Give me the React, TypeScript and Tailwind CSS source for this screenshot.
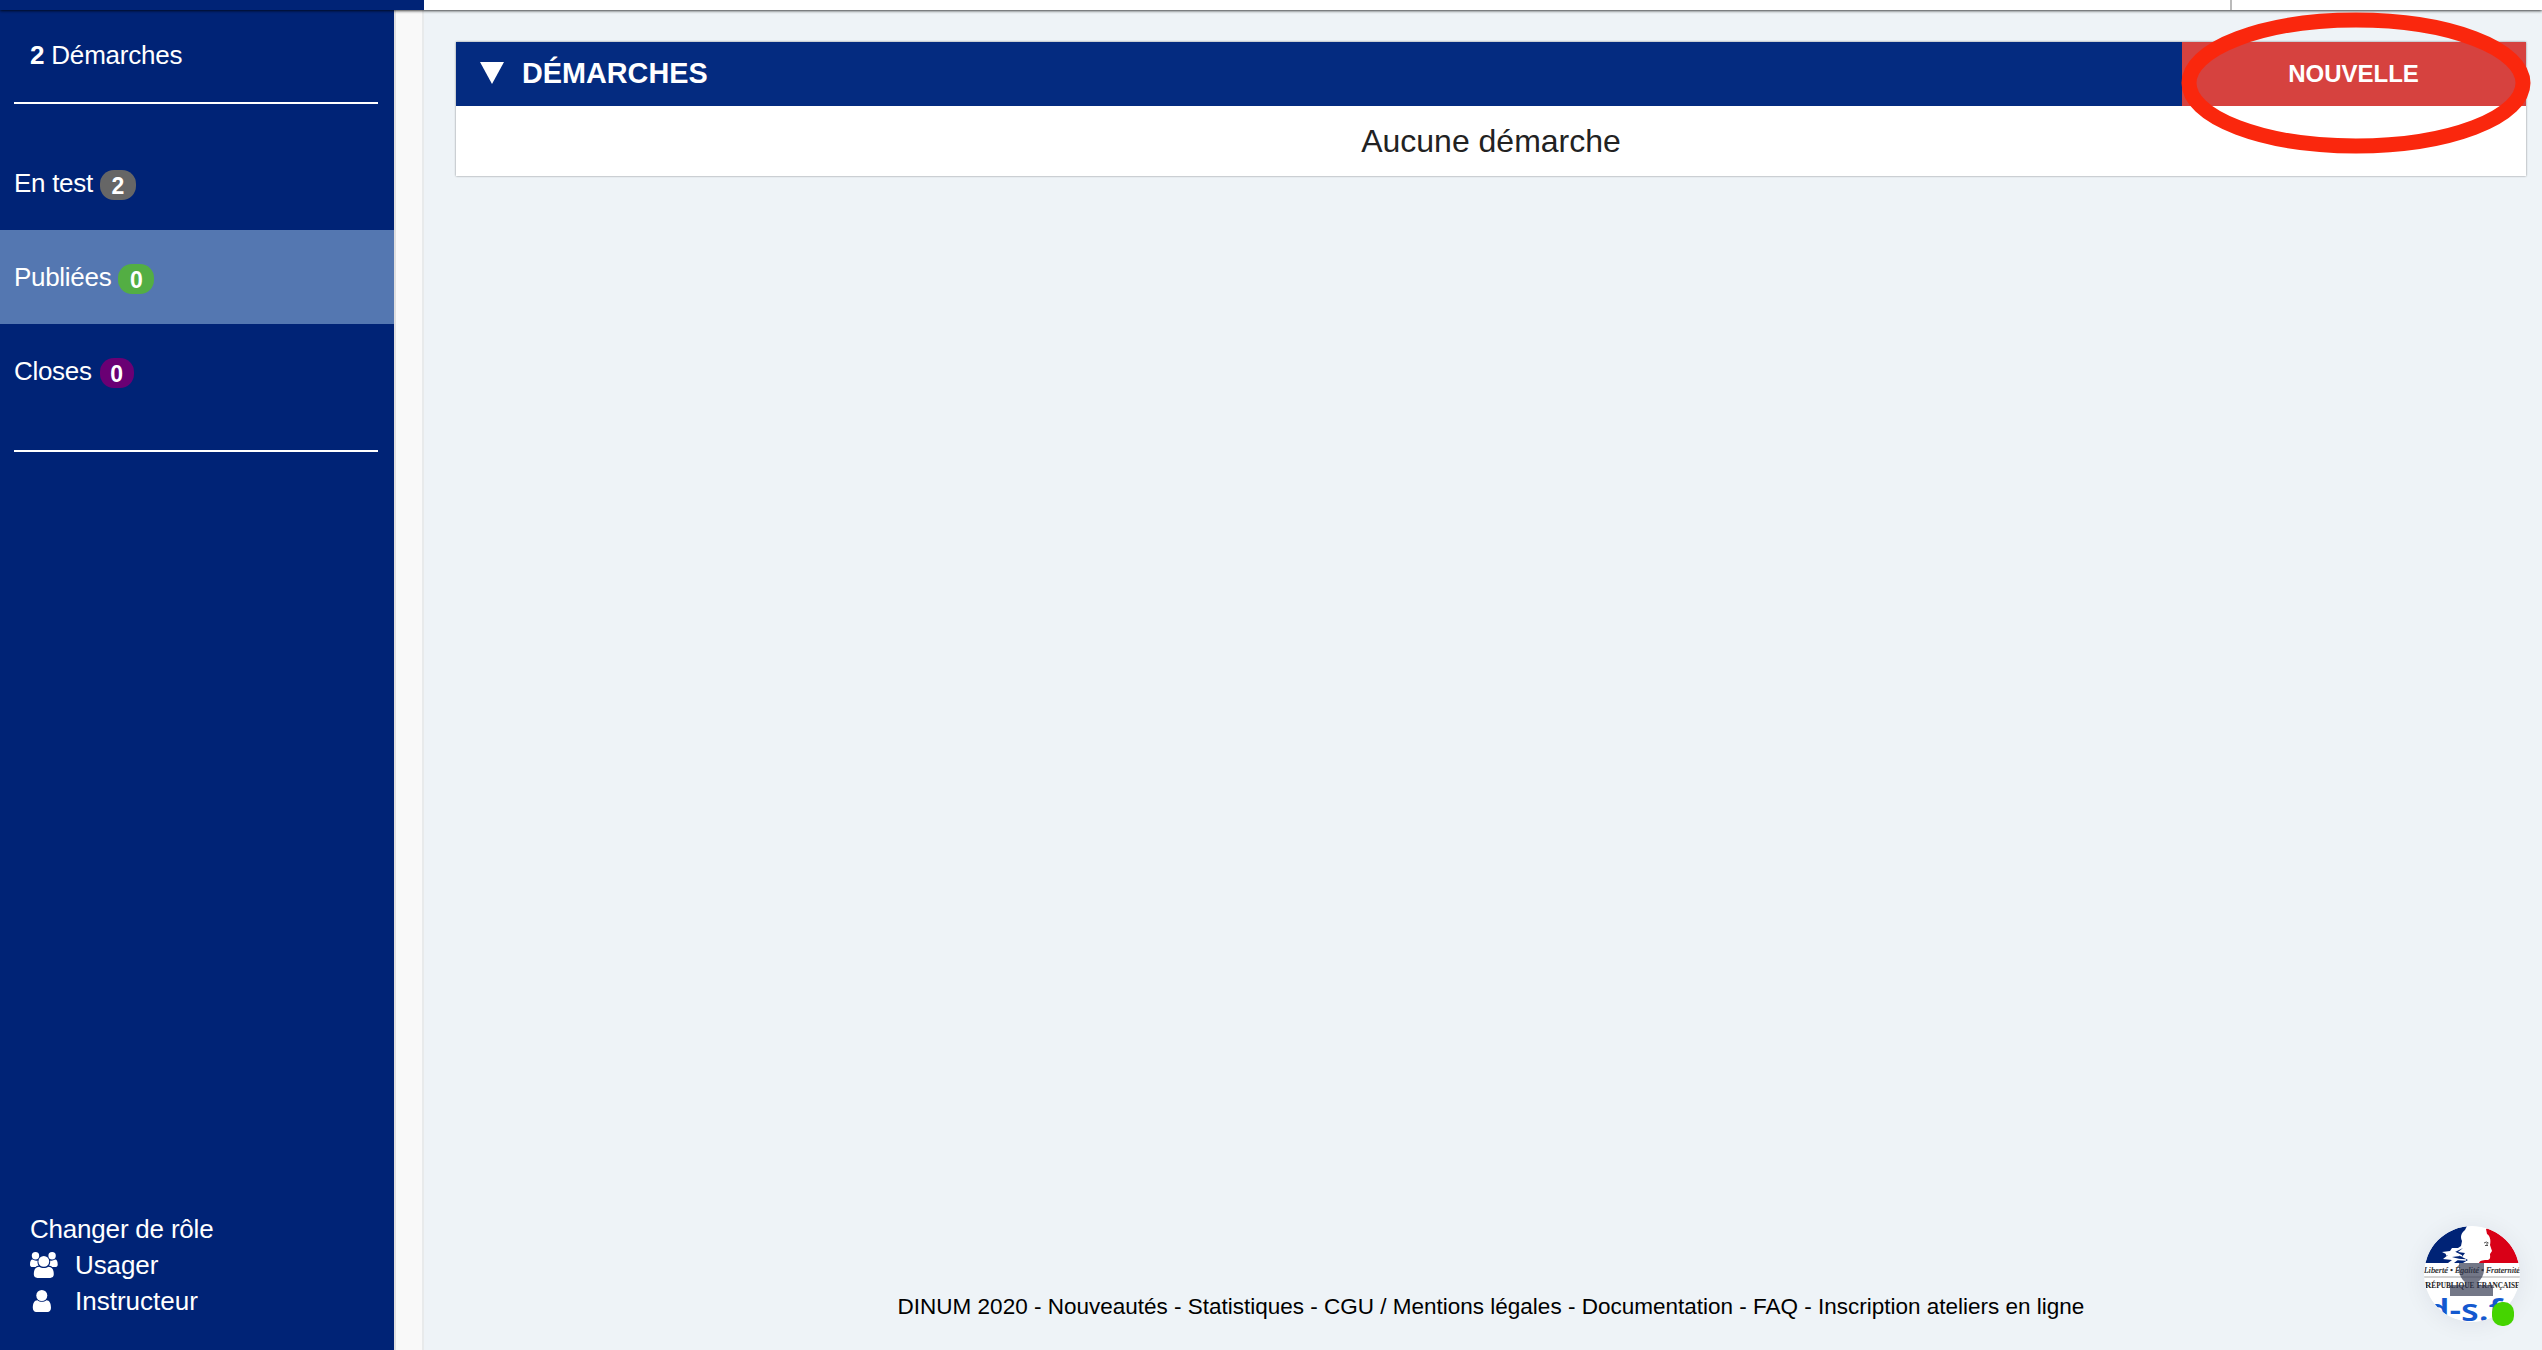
const filters = [
  { label: "En test", count: 2, row: "", badge: "bg-[#666666] w-9 ml-[7px]" },
  { label: "Publiées", count: 0, row: "bg-[#5477b1]", badge: "bg-[#53ae43] w-9 ml-[7px]" },
  { label: "Closes", count: 0, row: "", badge: "bg-[#6a0074] w-[34px] ml-2" },
];

const footerText =
  "DINUM 2020 - Nouveautés - Statistiques - CGU / Mentions légales - Documentation - FAQ - Inscription ateliers en ligne";

function UsersIcon() {
  return (
    <svg width="28" height="26" viewBox="0 0 28 26" fill="white">
      <circle cx="5.5" cy="3.8" r="3.7" />
      <circle cx="22.1" cy="3.8" r="3.7" />
      <path d="M2.4 7.6C1 7.6 0 9.4 0 12.4C0 14.2 1.1 15 2.6 15H5.6C6.6 14 7.6 13.8 8.6 13.8C7.7 12.4 7.4 10.8 7.5 8.6C5.8 9.1 4 8.6 2.4 7.6Z" />
      <path d="M25.2 7.6C26.700 7.6 27.7 9.4 27.7 12.4C27.7 14.2 26.6 15 25.1 15H22.1C21.1 14 20.1 13.8 19.1 13.8C20 12.4 20.3 10.8 20.2 8.6C21.8 9.1 23.6 8.6 25.2 7.6Z" />
      <circle cx="13.8" cy="9.4" r="5.4" />
      <path d="M9 14.7C5.4 14.7 3.8 17.8 3.8 22.3C3.8 24.6 5.2 25.9 7.4 25.9H20.2C22.4 25.9 23.8 24.6 23.8 22.3C23.8 17.8 22.2 14.7 18.6 14.7C17 15.6 15.6 16 13.8 16C12 16 10.6 15.6 9 14.7Z" />
    </svg>
  );
}

function UserIcon() {
  return (
    <svg width="24" height="22" viewBox="0 0 24 22" fill="white">
      <circle cx="11.8" cy="5.5" r="5.5" />
      <path d="M7.4 10.2C4.2 10.2 2.8 13.5 2.8 17.8C2.8 20.3 4.2 22 6.2 22H17.6C19.6 22 21 20.3 21 17.8C21 13.5 19.6 10.2 16.4 10.2C15 11.2 13.6 11.7 11.9 11.7C10.2 11.7 8.8 11.2 7.4 10.2Z" />
    </svg>
  );
}

function Sidebar() {
  return (
    <aside className="flex w-[394px] shrink-0 flex-col bg-[#002376] text-[26px] leading-9 text-white">
      <div className="h-[92px] pl-[30px] pt-[27px] tracking-[-0.2px]">
        <b>2</b> Démarches
      </div>
      <hr className="ml-[14px] w-[364px] border-t-2 border-white" />
      <nav className="pt-8">
        {filters.map((f) => (
          <a key={f.label} className={"flex h-[94px] items-center pl-[14px] tracking-[-0.3px] " + f.row}>
            <span className="-mt-px">{f.label}</span>
            <span
              className={
                "mt-[4px] flex h-[30px] items-center justify-center rounded-[14px] pt-[2px] text-[23px] font-bold leading-none tracking-normal " +
                f.badge
              }
            >
              {f.count}
            </span>
          </a>
        ))}
      </nav>
      <hr className="ml-[14px] mt-8 w-[364px] border-t-2 border-white" />
      <div className="mb-[31px] mt-auto pl-[30px]">
        <p className="tracking-[-0.2px]">Changer de rôle</p>
        <a className="flex items-center tracking-[-0.1px]">
          <span className="w-[45px]">
            <UsersIcon />
          </span>
          Usager
        </a>
        <a className="flex items-center">
          <span className="w-[45px]">
            <UserIcon />
          </span>
          Instructeur
        </a>
      </div>
    </aside>
  );
}

function Avatar() {
  return (
    <div className="absolute bottom-[28px] right-[22px] size-24">
      <svg className="block size-24 rounded-full shadow-[0_2px_24px_rgba(0,20,60,0.07)]" viewBox="0 0 96 96">
        <defs>
          <clipPath id="disc">
            <circle cx="48" cy="48" r="48" />
          </clipPath>
        </defs>
        <g clipPath="url(#disc)">
          <rect width="96" height="96" fill="white" />
          <path d="M0 0H43L41 4C37 7 36 11 38 15L37 20L34 22L28 22L26 25L18 26L24 29L19 33L28 34L24 37H0Z" fill="#002376" />
          <path d="M62 3L68 0H96V37H55C56 34 60 34 64 34C67 33 66 30 66 28L68 25L66 19C67 14 66 10 63 8Z" fill="#d90017" />
          <path d="M39 22L34 26L41 27L38 31L44 34L39 37H30L35 33L28 31L36 30L31 26Z" fill="#002376" />
          <path d="M22 29L30 26L38 30M27 33L42 34" stroke="white" strokeWidth="1.5" fill="none" />
          <path d="M60 17Q62.5 15 64.5 17M61 19.5H64M63 17V20" stroke="#555" strokeWidth="1" fill="none" />
          <g fontFamily="Liberation Serif, serif" fill="#222">
            <text x="0" y="47" fontSize="8" fontStyle="italic" stroke="#222" strokeWidth=".2" textLength="96" lengthAdjust="spacingAndGlyphs">
              Liberté • Égalité • Fraternité
            </text>
            <text x="1" y="61.5" fontSize="9" fontWeight="bold" textLength="95" lengthAdjust="spacingAndGlyphs">
              R<tspan fontSize="7.5">ÉPUBLIQUE</tspan> F<tspan fontSize="7.5">RANÇAISE</tspan>
            </text>
          </g>
          <path d="M0 51H96" stroke="#aaa" strokeWidth="1" />
          <text x="3" y="94.5" fontFamily="Noto Sans, sans-serif" fontSize="31" fontWeight="600" fill="#1459cf" textLength="75" lengthAdjust="spacingAndGlyphs">
            d-s.f
          </text>
          <path d="M35 37H60V45Q59 52 54 56V59H69V70H26V59H41V56Q36 52 35 45Z" fill="#30364e" fillOpacity=".68" />
        </g>
      </svg>
      <span className="absolute left-[68px] top-[76px] h-6 w-[22px] rounded-[10px] bg-[#45d400]" />
    </div>
  );
}

export default function App() {
  return (
    <div className="relative flex h-[1350px] w-[2542px] flex-col overflow-hidden bg-[#eef3f7] font-['Liberation_Sans',Arial,sans-serif]">
      <header className="z-10 flex h-[10px] shrink-0 bg-white shadow-[0_1px_3px_rgba(0,0,0,0.75)]">
        <div className="w-[424px] bg-[#002376]" />
        <div className="ml-[1806px] w-[2px] bg-[#bababa]" />
      </header>
      <div className="flex min-h-0 flex-1">
        <Sidebar />
        <div className="w-[30px] shrink-0 border-x-2 border-l-[#e0dfe0] border-r-[#e8eaeb] bg-[#f9f9f9]" />
        <main className="flex flex-1 flex-col pl-8 pr-4 pt-8">
          <section className="bg-white shadow-[0_0_2px_rgba(0,0,0,0.45)]">
            <div className="flex h-16 items-center bg-[#042b80] font-bold text-white">
              <svg className="-mt-[2px] ml-6" width="24" height="22" viewBox="0 0 24 22">
                <path d="M0 0H24L12 22Z" fill="white" />
              </svg>
              <h1 className="-mt-[2px] ml-[18px] text-[28.8px] leading-8">DÉMARCHES</h1>
              <button className="ml-auto h-16 w-[344px] bg-[#d6423f] pr-px text-[24px] font-bold">NOUVELLE</button>
            </div>
            <p className="h-[70px] text-center text-[32px] leading-[70px] text-[#222222]">Aucune démarche</p>
          </section>
          <footer className="mb-[27px] mt-auto text-center text-[22.5px] leading-8 text-black">
            <span className="whitespace-nowrap">{footerText}</span>
          </footer>
        </main>
      </div>
      <svg className="absolute left-[2181px] top-3 z-20" width="350" height="142" viewBox="0 0 350 142" fill="none">
        <ellipse cx="175" cy="71" rx="167" ry="63" stroke="#fa270d" strokeWidth="15" />
      </svg>
      <Avatar />
    </div>
  );
}
